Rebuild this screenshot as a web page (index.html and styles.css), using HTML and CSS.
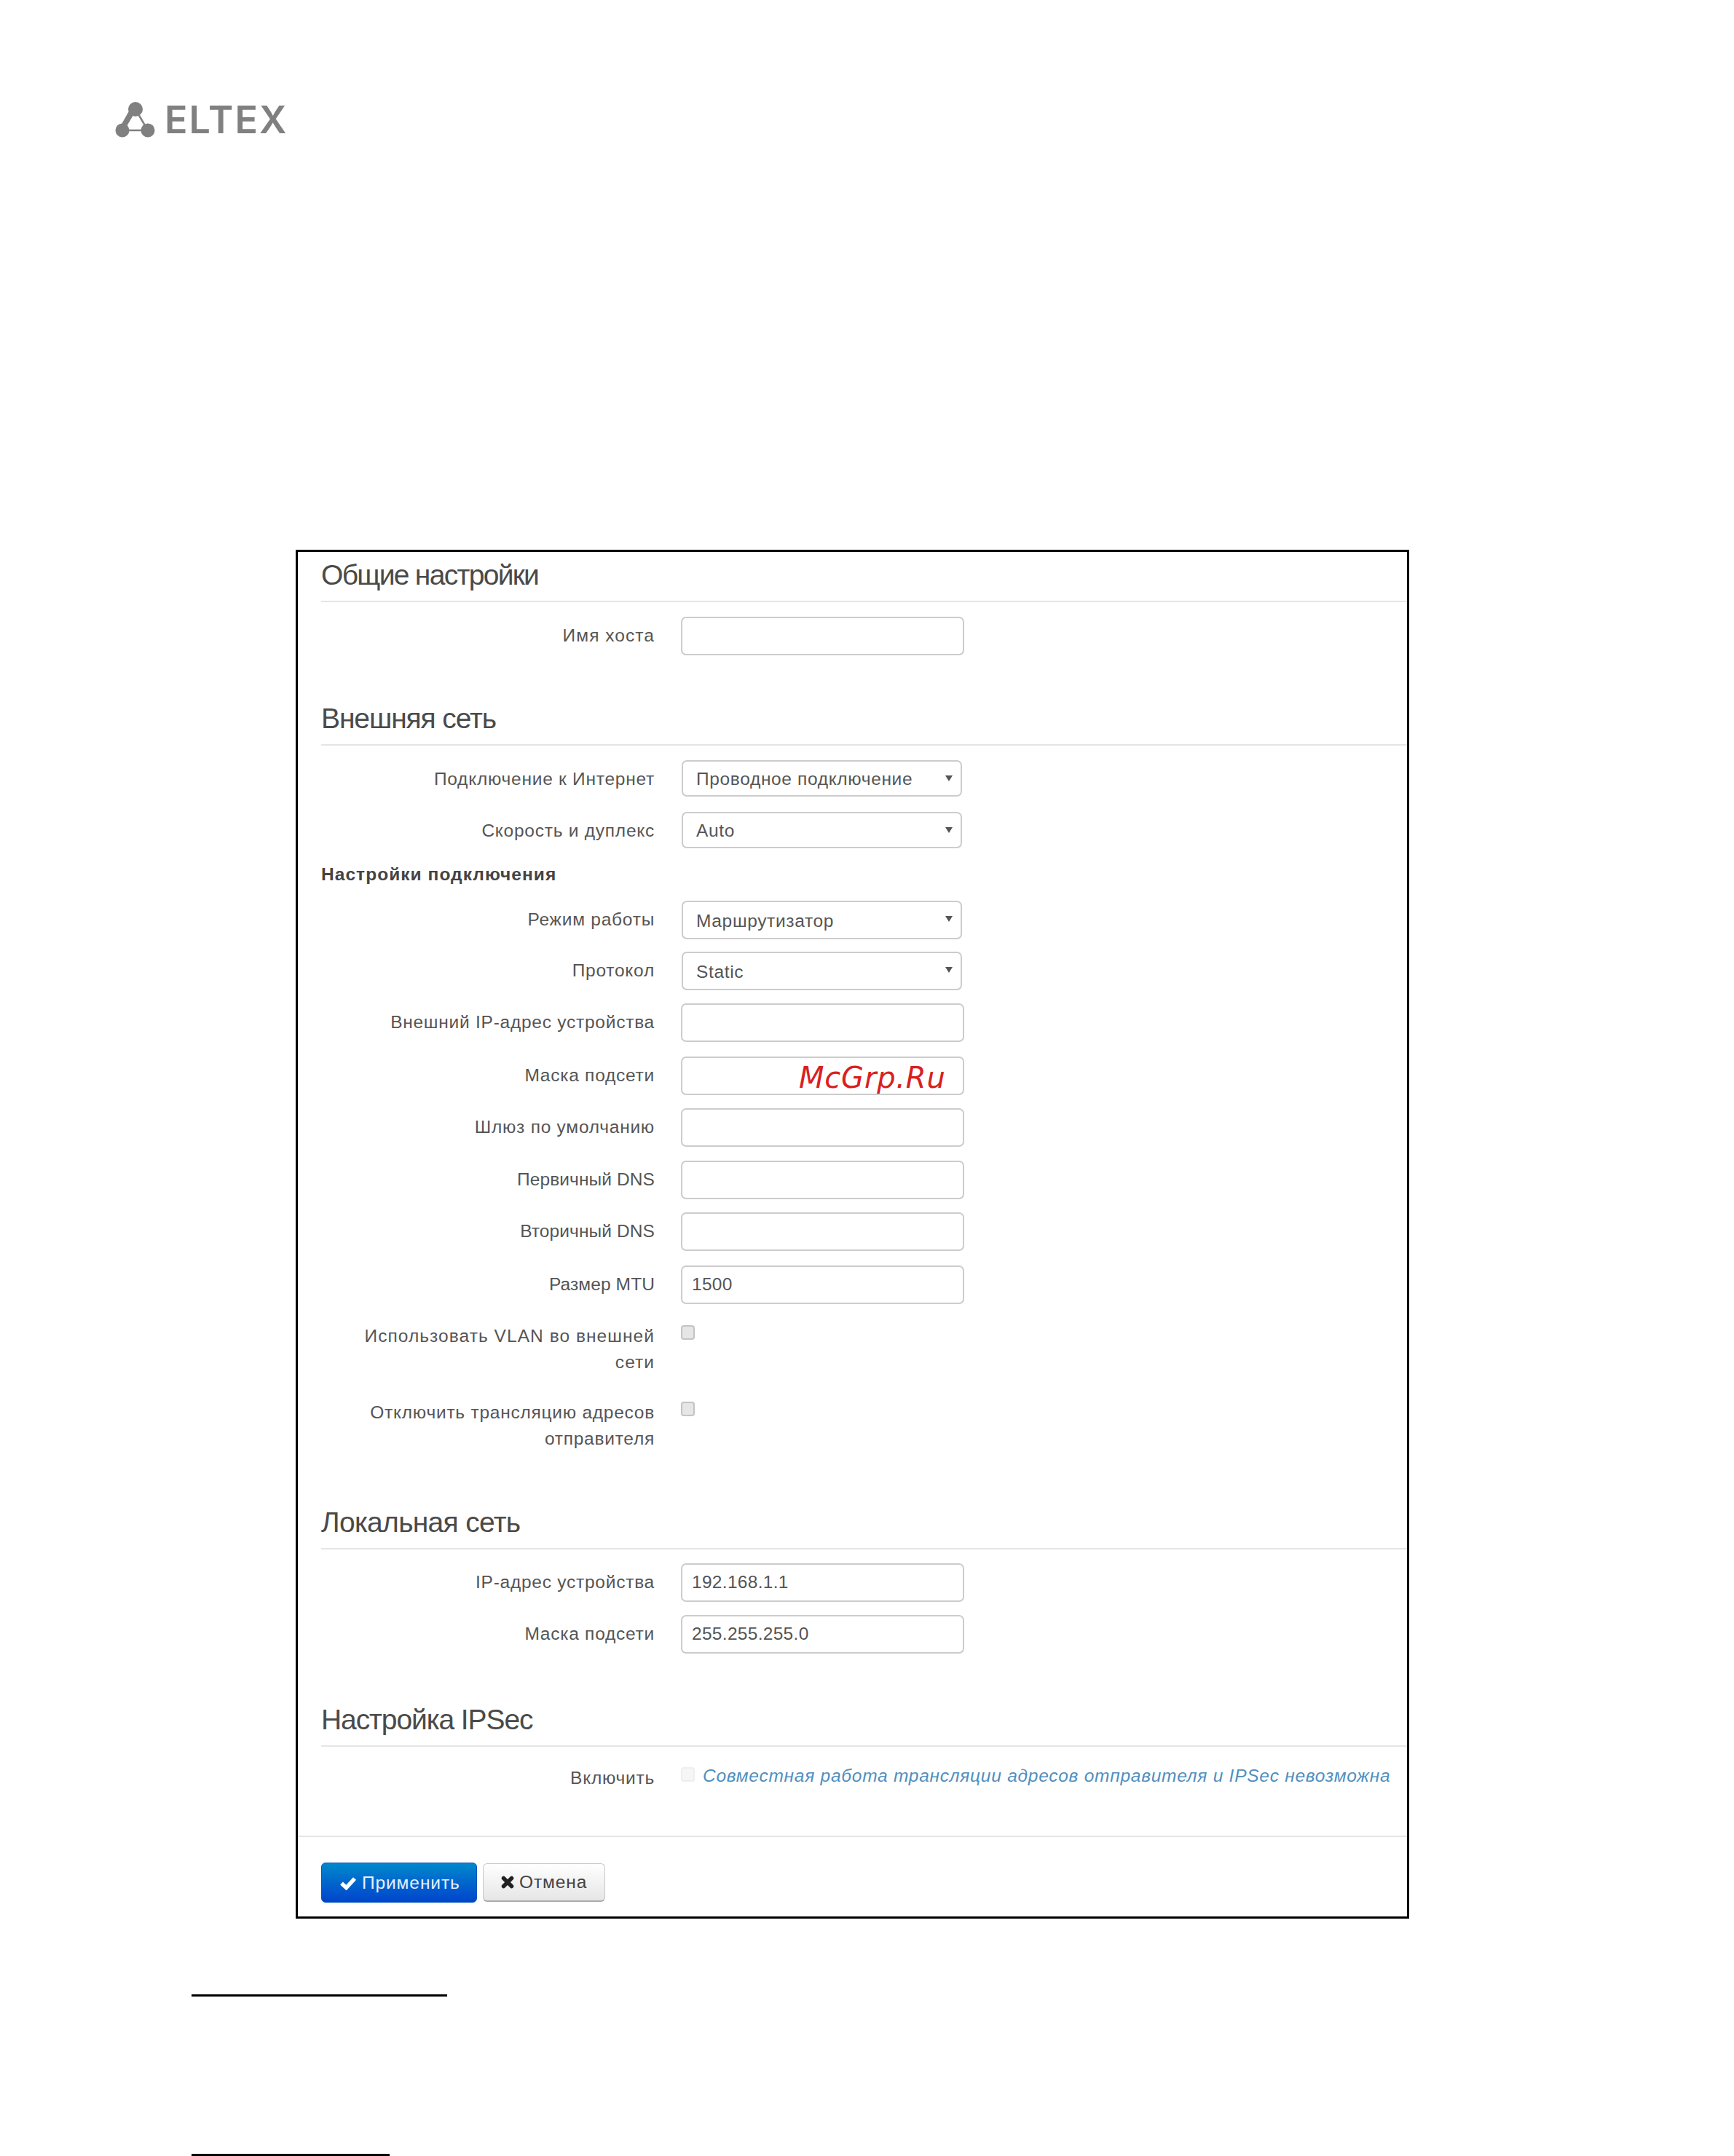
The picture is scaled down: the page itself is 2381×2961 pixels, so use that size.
FILE: index.html
```html
<!DOCTYPE html>
<html lang="ru">
<head>
<meta charset="utf-8">
<title>Eltex</title>
<link rel="stylesheet" href="styles.css">
</head>
<body>
<header class="top">
  <div class="logo">
    <svg class="logo-mark" width="56" height="52" viewBox="0 0 56 52">
      <path d="M28 11 10 40H45Z" fill="none" stroke="#808080" stroke-width="2.5"/>
      <path d="M20 12 8 33 15 36 28 14Z" fill="#808080"/>
      <circle cx="28" cy="11" r="10" fill="#808080"/>
      <circle cx="10" cy="40" r="9.5" fill="#808080"/>
      <circle cx="45" cy="40" r="9.5" fill="#808080"/>
    </svg>
    <span class="logo-word">ELTEX</span>
  </div>
</header>

<main class="panel">
  <section class="sec sec-first">
    <h2 class="title title-tight">Общие настройки</h2>
    <div class="row g20"><div class="lbl lbl-wide">Имя хоста</div><div class="field"></div></div>
  </section>

  <section class="sec sec-wan">
    <h2 class="title">Внешняя сеть</h2>
    <div class="row g20"><div class="lbl">Подключение к Интернет</div><div class="field select short">Проводное подключение</div></div>
    <div class="row g21"><div class="lbl">Скорость и дуплекс</div><div class="field select short">Auto</div></div>
    <h3 class="subtitle">Настройки подключения</h3>
    <div class="row"><div class="lbl">Режим работы</div><div class="field select">Маршрутизатор</div></div>
    <div class="row g17"><div class="lbl">Протокол</div><div class="field select">Static</div></div>
    <div class="row g18"><div class="lbl">Внешний IP-адрес устройства</div><div class="field"></div></div>
    <div class="row g20"><div class="lbl">Маска подсети</div><div class="field"></div><span class="mark">McGrp.Ru</span></div>
    <div class="row g18"><div class="lbl">Шлюз по умолчанию</div><div class="field"></div></div>
    <div class="row g19"><div class="lbl lbl-tight">Первичный DNS</div><div class="field"></div></div>
    <div class="row g18"><div class="lbl lbl-tight">Вторичный DNS</div><div class="field"></div></div>
    <div class="row g20"><div class="lbl lbl-tight">Размер MTU</div><div class="field">1500</div></div>
    <div class="row g19"><div class="lbl lbl-wide lbl-two">Использовать VLAN во внешней<br>сети</div><input class="check" type="checkbox"></div>
    <div class="row g26"><div class="lbl lbl-two">Отключить трансляцию адресов<br>отправителя</div><input class="check" type="checkbox"></div>
  </section>

  <section class="sec sec-lan">
    <h2 class="title title-loose">Локальная сеть</h2>
    <div class="row g19"><div class="lbl">IP-адрес устройства</div><div class="field">192.168.1.1</div></div>
    <div class="row g18"><div class="lbl">Маска подсети</div><div class="field">255.255.255.0</div></div>
  </section>

  <section class="sec sec-ipsec">
    <h2 class="title">Настройка IPSec</h2>
    <div class="row g18"><div class="lbl lbl-two">Включить</div><input class="check check-off" type="checkbox" disabled><em class="note">Совместная работа трансляции адресов отправителя и IPSec невозможна</em></div>
  </section>

  <footer class="actions">
    <button class="btn btn-primary" type="button">
      <svg width="24" height="20" viewBox="0 0 24 20"><path d="M3 10.5 9.5 16.5 21 4" fill="none" stroke="#fff" stroke-width="5.5"/></svg>
      Применить
    </button>
    <button class="btn btn-plain" type="button">
      <svg width="18" height="18" viewBox="0 0 18 18"><path d="M3.5 3.5 14.5 14.5M14.5 3.5 3.5 14.5" fill="none" stroke="#222" stroke-width="5.5" stroke-linecap="round"/></svg>
      Отмена
    </button>
  </footer>
</main>

<div class="rule rule-one"></div>
<div class="rule rule-two"></div>
</body>
</html>
```

FILE: styles.css
```css
html, body {
  margin: 0;
  padding: 0;
  background: #fff;
}

body {
  width: 2381px;
  height: 2961px;
  overflow: hidden;
  font-family: "Liberation Sans", Arial, sans-serif;
  font-size: 24.5px;
  color: #555;
}

.top {
  box-sizing: border-box;
  height: 755px;
  padding: 139px 0 0 158px;
}

.logo {
  display: flex;
  align-items: flex-end;
  gap: 12px;
}

.logo-mark {
  display: block;
}

.logo-word {
  font-family: "Inter", sans-serif;
  font-weight: 600;
  font-size: 52px;
  line-height: 38px;
  height: 38px;
  margin-bottom: 7px;
  letter-spacing: 2px;
  color: #808080;
}

.panel {
  box-sizing: border-box;
  width: 1529px;
  height: 1880px;
  margin-left: 406px;
  border: 3px solid #000;
}

.sec {
  padding-left: 32px;
}

.sec-first { padding-top: 9px; }
.sec-wan { margin-top: 64px; }
.sec-lan { margin-top: 74px; }
.sec-ipsec { margin-top: 68px; }

.title {
  box-sizing: border-box;
  height: 60px;
  margin: 0;
  border-bottom: 2px solid #e5e5e5;
  font-size: 39px;
  font-weight: 400;
  line-height: 45px;
  letter-spacing: -1.1px;
  color: #4a4a4a;
}

.title-tight { letter-spacing: -1.7px; }
.title-loose { letter-spacing: -0.7px; }

.subtitle {
  margin: 21px 0;
  font-size: 24.5px;
  font-weight: 700;
  line-height: 30px;
  letter-spacing: 1.05px;
  color: #444;
}

.row {
  position: relative;
  display: flex;
  align-items: flex-start;
}

.g17 { margin-top: 17px; }
.g18 { margin-top: 18px; }
.g19 { margin-top: 19px; }
.g20 { margin-top: 20px; }
.g21 { margin-top: 21px; }
.g26 { margin-top: 26px; }

.lbl {
  box-sizing: border-box;
  flex: none;
  width: 458px;
  margin-right: -1px;
  padding-top: 8px;
  text-align: right;
  line-height: 36px;
  letter-spacing: 0.75px;
  white-space: nowrap;
}

.lbl-two { padding-top: 7px; }
.lbl-wide { letter-spacing: 1.05px; }
.lbl-tight { letter-spacing: 0.1px; }

.field {
  box-sizing: border-box;
  position: relative;
  flex: none;
  width: 389px;
  height: 53px;
  margin-left: 37px;
  padding-left: 13px;
  border: 2px solid #ccc;
  border-radius: 7px;
  line-height: 47px;
  letter-spacing: 0.3px;
  background: #fff;
}

.select {
  width: 385px;
  margin-left: 38px;
  padding-left: 18px;
  line-height: 52px;
  letter-spacing: 0.65px;
}

.select::after {
  content: "";
  position: absolute;
  top: 19px;
  right: 11px;
  border-style: solid;
  border-width: 8px 5px 0;
  border-color: #555 transparent transparent;
}

.short {
  height: 50px;
  line-height: 48px;
}

.check {
  box-sizing: border-box;
  flex: none;
  appearance: none;
  width: 19px;
  height: 20px;
  margin: 10px 0 0 37px;
  border: 2px solid #c4c4c4;
  border-radius: 4px;
  background: #e6e6e6;
}

.check-off {
  border-color: #eee;
  background: #f6f6f6;
}

.note {
  margin: 4px 0 0 11px;
  line-height: 36px;
  letter-spacing: 0.74px;
  white-space: nowrap;
  color: #4f8fbf;
}

.mark {
  position: absolute;
  top: 6px;
  left: 656px;
  font-family: "DejaVu Sans", sans-serif;
  font-size: 40px;
  font-style: italic;
  line-height: 46px;
  letter-spacing: 0.8px;
  color: #d92020;
}

.actions {
  display: flex;
  align-items: flex-start;
  gap: 8px;
  margin-top: 61px;
  padding: 35px 0 0 32px;
  border-top: 2px solid #e5e5e5;
}

.btn {
  box-sizing: border-box;
  display: flex;
  align-items: center;
  gap: 7px;
  height: 55px;
  padding: 0 22px 0 24px;
  border: 1px solid #c8c8c8;
  border-radius: 6px;
  font: inherit;
  line-height: 30px;
  letter-spacing: 0.9px;
}

.btn-primary {
  width: 214px;
  border-color: #0055bb;
  background: linear-gradient(#0088cc, #0044cc);
  color: #e8f0ff;
}

.btn-plain {
  width: 168px;
  height: 53px;
  margin-top: 1px;
  border-bottom: 2px solid #aaa;
  background: linear-gradient(#fff, #e6e6e6);
  color: #444;
}

.rule {
  height: 3px;
  margin-left: 263px;
  background: #000;
}

.rule-one {
  width: 351px;
  margin-top: 104px;
}

.rule-two {
  width: 272px;
  margin-top: 216px;
}
```
